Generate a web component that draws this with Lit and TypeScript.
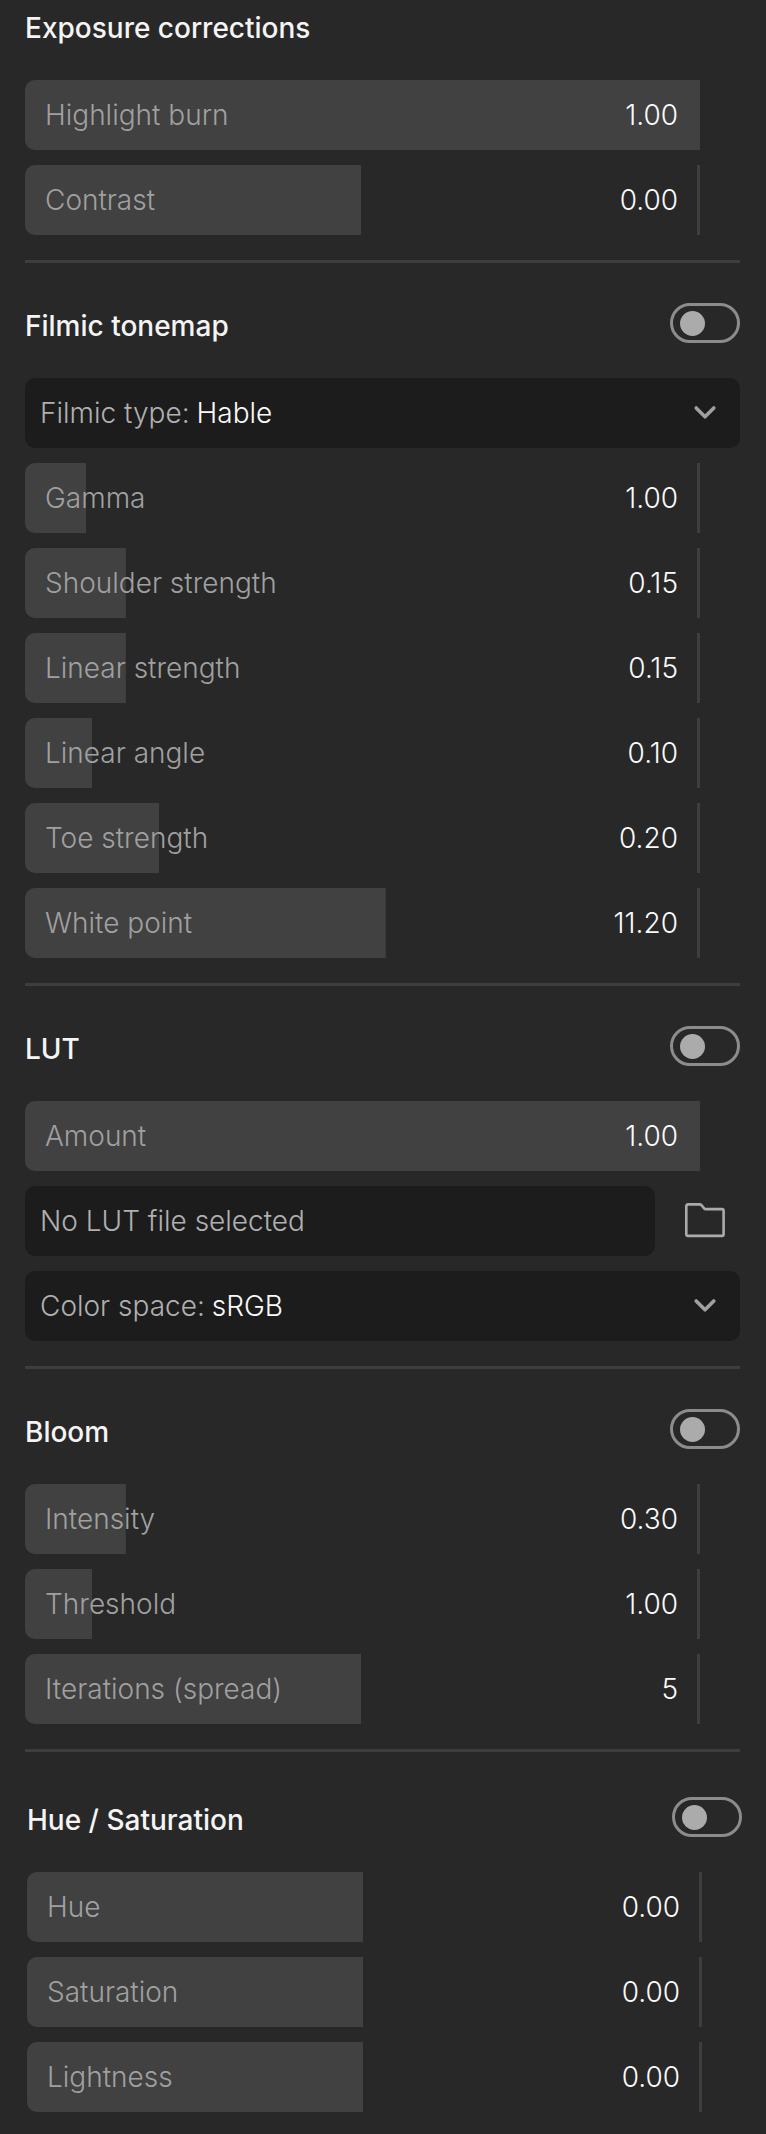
import { LitElement, html, css, nothing } from "lit";
import { customElement, property } from "lit/decorators.js";
import { styleMap } from "lit/directives/style-map.js";

const textReset = css`
  * {
    box-sizing: border-box;
  }
  input,
  select,
  button {
    margin: 0;
    padding: 0;
    border: 0;
    border-radius: 0;
    background: none;
    color: inherit;
    font: inherit;
    appearance: none;
    outline: none;
  }
`;

@customElement("param-slider")
export class ParamSlider extends LitElement {
  static styles = [
    textReset,
    css`
      :host {
        display: block;
        padding-right: 40px;
      }
      .slider {
        display: grid;
        grid-template-columns: 1fr auto;
        align-items: center;
        height: 70px;
      }
      .range {
        grid-area: 1 / 1 / 2 / 3;
        width: 100%;
        height: 70px;
        border-right: 3px solid #3e3e3e;
        border-radius: 10px 0 0 10px;
        background: linear-gradient(#414141, #414141) no-repeat 0 0 / var(--fill) 100%;
        cursor: ew-resize;
      }
      .range-full {
        border-right-color: #414141;
      }
      .range::-webkit-slider-thumb {
        appearance: none;
        width: 1px;
        height: 70px;
        background: transparent;
      }
      .name,
      .value {
        grid-row: 1;
        pointer-events: none;
        z-index: 1;
      }
      .name {
        grid-column: 1;
        padding-left: 20px;
        color: #a0a0a0;
      }
      .value {
        grid-column: 2;
        padding-right: 22px;
        color: #fafafa;
      }
    `,
  ];

  @property() name = "";
  @property({ type: Number }) min = 0;
  @property({ type: Number }) max = 1;
  @property({ type: Number }) value = 0;
  @property({ type: Number }) digits = 2;

  private onInput(e: Event) {
    this.value = Number((e.target as HTMLInputElement).value);
  }

  render() {
    const share = (this.value - this.min) / (this.max - this.min);
    return html`
      <div class="slider">
        <input
          class=${share === 1 ? "range range-full" : "range"}
          id="range"
          type="range"
          min=${this.min}
          max=${this.max}
          step=${Math.pow(10, -this.digits)}
          .value=${String(this.value)}
          style=${styleMap({ "--fill": `${share * 100}%` })}
          @input=${this.onInput}
        />
        <label class="name" for="range">${this.name}</label>
        <output class="value" for="range">${this.value.toFixed(this.digits)}</output>
      </div>
    `;
  }
}

@customElement("param-select")
export class ParamSelect extends LitElement {
  static styles = [
    textReset,
    css`
      :host {
        display: block;
      }
      .box {
        display: grid;
        grid-template-columns: auto 1fr;
        align-items: center;
        height: 70px;
        border-radius: 10px;
        background: #1c1c1c;
      }
      .name {
        grid-area: 1 / 1;
        padding-left: 15px;
        color: #b0b0b0;
      }
      .choice {
        grid-area: 1 / 2;
        height: 70px;
        padding-left: 7px;
        color: #fafafa;
      }
      .choice option {
        background: #1c1c1c;
      }
      .chevron {
        grid-area: 1 / 2;
        justify-self: end;
        margin-right: 23px;
        pointer-events: none;
      }
    `,
  ];

  @property() name = "";
  @property({ attribute: false }) options: string[] = [];

  render() {
    return html`
      <div class="box">
        <label class="name" for="choice">${this.name}:</label>
        <select class="choice" id="choice">
          ${this.options.map((o) => html`<option>${o}</option>`)}
        </select>
        <svg class="chevron" width="24" height="16" viewBox="0 0 24 16" aria-hidden="true">
          <path
            d="M3.2 3 12 11.8 20.8 3"
            fill="none"
            stroke="#a0a0a0"
            stroke-width="3.6"
            stroke-linecap="round"
            stroke-linejoin="round"
          />
        </svg>
      </div>
    `;
  }
}

@customElement("file-picker")
export class FilePicker extends LitElement {
  static styles = [
    textReset,
    css`
      :host {
        display: flex;
        gap: 15px;
      }
      .file {
        flex: 1;
        min-width: 0;
        height: 70px;
        padding: 0 15px;
        border-radius: 10px;
        background: #1c1c1c;
        color: #b0b0b0;
      }
      .browse {
        display: grid;
        place-items: center;
        width: 70px;
        height: 70px;
        cursor: pointer;
      }
    `,
  ];

  render() {
    return html`
      <input class="file" type="text" readonly aria-label="LUT file" value="No LUT file selected" />
      <button class="browse" type="button" aria-label="Browse for a LUT file">
        <svg width="40" height="36" viewBox="0 0 40 36" aria-hidden="true">
          <path
            d="M3 1.4h11.8q.8 0 1.4.6l3.2 3.6q.4.5 1 .5h16.5q1.7 0 1.7 1.7v23.4q0 1.7-1.7 1.7H3q-1.7 0-1.7-1.7V3.1q0-1.7 1.7-1.7z"
            fill="none"
            stroke="#ababab"
            stroke-width="2.6"
          />
        </svg>
      </button>
    `;
  }
}

@customElement("param-section")
export class ParamSection extends LitElement {
  static styles = [
    textReset,
    css`
      :host {
        display: block;
      }
      .head {
        display: flex;
        align-items: center;
        justify-content: space-between;
        height: 40px;
        margin-bottom: 35px;
      }
      .title {
        margin: 0;
        padding-top: 5px;
        color: #f4f4f4;
        font-size: 28px;
        font-weight: 500;
        line-height: 36px;
      }
      .toggle {
        display: flex;
        align-items: center;
        width: 70px;
        height: 40px;
        padding-left: 7px;
        border: 3px solid #8c8c8c;
        border-radius: 20px;
        cursor: pointer;
      }
      .toggle::before {
        content: "";
        width: 25px;
        height: 25px;
        border-radius: 50%;
        background: #ababab;
      }
      .toggle:checked {
        justify-content: flex-end;
        padding: 0 7px 0 0;
      }
      .rows {
        display: flex;
        flex-direction: column;
        gap: 15px;
      }
    `,
  ];

  @property() name = "";
  @property({ type: Boolean }) switchable = false;

  render() {
    return html`
      <section aria-labelledby="title">
        <div class="head">
          <h2 class="title" id="title">${this.name}</h2>
          ${this.switchable
            ? html`<input class="toggle" type="checkbox" role="switch" aria-labelledby="title" />`
            : nothing}
        </div>
        <div class="rows"><slot></slot></div>
      </section>
    `;
  }
}

@customElement("app-root")
export class AppRoot extends LitElement {
  static styles = css`
    :host {
      display: block;
      box-sizing: border-box;
      min-height: 100vh;
      background: #282828;
      color: #fafafa;
      font-family: Inter, "Noto Sans", sans-serif;
      font-size: 28px;
      font-weight: 300;
      line-height: 36px;
    }
    .panel {
      padding: 5px 26px 0 25px;
    }
    .panel-color {
      padding: 45px 24px 20px 27px;
    }
    .divider {
      height: 3px;
      margin: 25px 0 40px;
      border: 0;
      background: #3e3e3e;
    }
    .divider-last {
      margin-bottom: 0;
    }
  `;

  render() {
    return html`
      <main>
        <div class="panel">
          <param-section name="Exposure corrections">
            <param-slider name="Highlight burn" value="1"></param-slider>
            <param-slider name="Contrast" min="-1" value="0"></param-slider>
          </param-section>
          <hr class="divider" />
          <param-section name="Filmic tonemap" switchable>
            <param-select name="Filmic type" .options=${["Hable", "ACES", "Reinhard"]}></param-select>
            <param-slider name="Gamma" min="0.1" max="10" value="1"></param-slider>
            <param-slider name="Shoulder strength" value="0.15"></param-slider>
            <param-slider name="Linear strength" value="0.15"></param-slider>
            <param-slider name="Linear angle" value="0.1"></param-slider>
            <param-slider name="Toe strength" value="0.2"></param-slider>
            <param-slider name="White point" min="1" max="20" value="11.2"></param-slider>
          </param-section>
          <hr class="divider" />
          <param-section name="LUT" switchable>
            <param-slider name="Amount" value="1"></param-slider>
            <file-picker></file-picker>
            <param-select name="Color space" .options=${["sRGB", "Linear"]}></param-select>
          </param-section>
          <hr class="divider" />
          <param-section name="Bloom" switchable>
            <param-slider name="Intensity" max="2" value="0.3"></param-slider>
            <param-slider name="Threshold" max="10" value="1"></param-slider>
            <param-slider name="Iterations (spread)" max="10" value="5" digits="0"></param-slider>
          </param-section>
          <hr class="divider divider-last" />
        </div>
        <div class="panel panel-color">
          <param-section name="Hue / Saturation" switchable>
            <param-slider name="Hue" min="-1" value="0"></param-slider>
            <param-slider name="Saturation" min="-1" value="0"></param-slider>
            <param-slider name="Lightness" min="-1" value="0"></param-slider>
          </param-section>
        </div>
      </main>
    `;
  }
}
